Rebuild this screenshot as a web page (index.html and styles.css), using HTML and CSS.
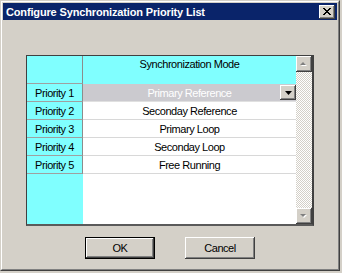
FILE: index.html
```html
<!DOCTYPE html>
<html>
<head>
<meta charset="utf-8">
<link rel="stylesheet" href="styles.css">
</head>
<body>
<div class="window">
  <div class="frame">
    <div class="titlebar">
      <span class="title">Configure Synchronization Priority List</span>
      <div class="close">
        <svg width="8" height="7" viewBox="0 0 8 7"><path d="M0 0h2v1h1v1h2V1h1V0h2v1H7v1H6v1H5v1h1v1h1v1h1v1H6V6H5V5H3v1H2v1H0V6h1V5h1V4h1V3H2V2H1V1H0z" fill="#000"/></svg>
      </div>
    </div>
    <div class="content">
      <div class="grid">
        <div class="table">
          <div class="row head">
            <div class="rh"></div>
            <div class="cell hc">Synchronization Mode</div>
          </div>
          <div class="row sel">
            <div class="rh">Priority 1</div>
            <div class="cell">Primary Reference
              <div class="dd">
                <svg width="7" height="4" viewBox="0 0 7 4"><path d="M0 0h7L3.5 4z" fill="#000"/></svg>
              </div>
            </div>
          </div>
          <div class="row">
            <div class="rh">Priority 2</div>
            <div class="cell">Seconday Reference</div>
          </div>
          <div class="row">
            <div class="rh">Priority 3</div>
            <div class="cell">Primary Loop</div>
          </div>
          <div class="row">
            <div class="rh">Priority 4</div>
            <div class="cell">Seconday Loop</div>
          </div>
          <div class="row">
            <div class="rh">Priority 5</div>
            <div class="cell">Free Running</div>
          </div>
          <div class="row fill">
            <div class="rh"></div>
            <div class="cell"></div>
          </div>
        </div>
        <div class="vscroll">
          <div class="sbtn">
            <svg width="8" height="5" viewBox="0 0 8 5"><path d="M4 1L7 4H1z" fill="#fff"/><path d="M3 0L6 3H0z" fill="#808080"/></svg>
          </div>
          <div class="track"></div>
          <div class="sbtn">
            <svg width="8" height="5" viewBox="0 0 8 5"><path d="M1 1h6L4 4z" fill="#fff"/><path d="M0 0h6L3 3z" fill="#808080"/></svg>
          </div>
        </div>
      </div>
      <div class="buttons">
        <div class="btn default">OK</div>
        <div class="btn">Cancel</div>
      </div>
    </div>
  </div>
</div>
</body>
</html>
```
FILE: styles.css
```css
html, body {
  margin: 0;
  padding: 0;
}
body {
  background: #D4D0C8;
  width: 342px;
  height: 273px;
  overflow: hidden;
  font-family: "Liberation Sans", Arial, sans-serif;
  font-size: 11px;
  letter-spacing: -0.45px;
  color: #000;
}
.window {
  width: 340px;
  height: 271px;
  box-sizing: border-box;
  border: 1px solid;
  border-color: #D4D0C8 #404040 #404040 #D4D0C8;
  background: #D4D0C8;
}
.frame {
  height: 100%;
  box-sizing: border-box;
  border: 1px solid;
  border-color: #fff #808080 #808080 #fff;
  padding: 1px;
  display: flex;
  flex-direction: column;
}
.titlebar {
  height: 17px;
  background: #0A246A;
  display: flex;
  align-items: center;
  justify-content: space-between;
  padding: 0 2px 0 3px;
  flex: none;
}
.title {
  color: #fff;
  font-weight: bold;
  letter-spacing: -0.15px;
}
.close {
  width: 16px;
  height: 14px;
  box-sizing: border-box;
  background: #D4D0C8;
  box-shadow: inset -1px -1px #404040, inset 1px 1px #fff, inset -2px -2px #808080;
  display: flex;
  align-items: center;
  justify-content: center;
}
.close svg {
  display: block;
  margin: 0 0 1px 0;
}
.content {
  flex: 1;
  display: flex;
  flex-direction: column;
  padding-top: 35px;
}
.grid {
  margin-left: 23px;
  width: 288px;
  height: 171px;
  box-sizing: border-box;
  border-style: solid;
  border-width: 1px 2px 2px 1px;
  border-color: #404040 #404040 #5a5a5a #404040;
  display: flex;
}
.table {
  width: 269px;
  display: flex;
  flex-direction: column;
}
.row {
  display: flex;
  height: 18px;
  flex: none;
}
.row.head {
  height: 28px;
}
.row.fill {
  flex: 1;
}
.rh {
  width: 56px;
  box-sizing: border-box;
  background: #80FFFF;
  border-right: 1px solid #8c8c8c;
  border-bottom: 1px solid #a0a0a0;
  display: flex;
  align-items: center;
  justify-content: center;
}
.row.fill .rh {
  border-bottom: none;
  border-right: none;
}
.cell {
  width: 213px;
  box-sizing: border-box;
  background: #fff;
  border-bottom: 1px solid #d8d8d8;
  display: flex;
  align-items: center;
  justify-content: center;
  position: relative;
}
.row.fill .cell {
  border-bottom: none;
}
.cell.hc {
  background: #80FFFF;
  align-items: flex-start;
  padding-top: 2px;
  border-bottom: none;
}
.row.sel .cell {
  background: #CBCACF;
  color: #fff;
  border-bottom-color: #e0e0e0;
}
.dd {
  position: absolute;
  right: 0;
  top: 1px;
  width: 16px;
  height: 15px;
  box-sizing: border-box;
  background: #D4D0C8;
  box-shadow: inset -1px -1px #404040, inset 1px 1px #fff, inset -2px -2px #808080;
  display: flex;
  align-items: center;
  justify-content: center;
}
.vscroll {
  width: 16px;
  display: flex;
  flex-direction: column;
}
.sbtn {
  width: 16px;
  height: 16px;
  flex: none;
  box-sizing: border-box;
  background: #D4D0C8;
  box-shadow: inset -1px -1px #404040, inset 1px 1px #fff, inset -2px -2px #808080;
  display: flex;
  align-items: center;
  justify-content: center;
}
.sbtn svg {
  display: block;
}
.track {
  flex: 1;
  background: repeating-conic-gradient(#fff 0 25%, #D4D0C8 0 50%) 0 0 / 2px 2px;
}
.buttons {
  margin-top: 11px;
  display: flex;
  justify-content: center;
  gap: 30px;
}
.btn {
  width: 70px;
  height: 22px;
  box-sizing: border-box;
  background: #D4D0C8;
  box-shadow: inset -1px -1px #404040, inset 1px 1px #fff, inset -2px -2px #808080;
  display: flex;
  align-items: center;
  justify-content: center;
}
.btn.default {
  border: 1px solid #000;
}
```
